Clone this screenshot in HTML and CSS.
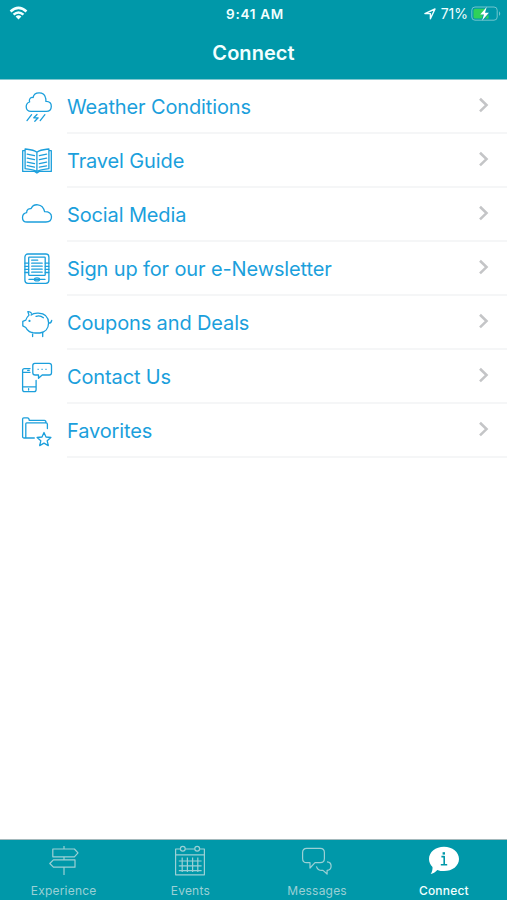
FILE: index.html
```html
<!DOCTYPE html>
<html lang="en">
<head>
<meta charset="utf-8">
<meta name="viewport" content="width=device-width, initial-scale=1">
<title>Connect</title>
<link rel="stylesheet" href="styles.css">
</head>
<body>
<div class="app">
  <header class="header">
    <div class="status">
      <svg class="wifi" viewBox="0 0 20 16"><path d="M1.2 5.6Q10-2.4 18.8 5.6L17.1 7.5Q10 1.2 2.9 7.5Z"/><path d="M4.2 8.7Q10 3.6 15.8 8.7L14.1 10.4Q10 7 5.9 10.4Z"/><path d="M7.1 11.5Q10 9.1 12.9 11.5L10 14.4Z"/></svg>
      <span class="time">9:41 AM</span>
      <div class="power">
        <svg class="location" viewBox="0 0 12 12"><path d="M.9 5.6 11 1 6.4 10.8V5.6Z"/></svg>
        <span class="percent">71%</span>
        <svg class="battery" viewBox="0 0 31 16"><rect x=".8" y="1" width="25.4" height="13.2" rx="3.2"/><path class="charge" d="M4 2.8H14.5L9.4 8.5H12L10.8 12.6H4Q2.5 12.6 2.5 11V4.4Q2.5 2.8 4 2.8Z"/><path class="charge" d="M17.5 8.6V12.6H14Z"/><path class="cap" d="M28 5.2q2.5 2.4 0 4.8Z"/><path class="bolt" d="M15.7 1 9.2 8.5H13L11.1 14.6 17.9 6.7H14Z"/></svg>
      </div>
    </div>
    <h1 class="title">Connect</h1>
  </header>
  <main class="list">
    <a class="row">
      <svg class="icon" viewBox="0 0 36 36"><path d="M12 23.4C8.9 23.4 7.2 21.1 7.2 18.7 7.2 16.2 8.7 14.6 10.6 14 9.5 10.9 12 9 14.1 9.6 15.2 3.4 24.8 3.3 26.4 9.4 27.2 11.3 26.8 12.5 26.9 13.4 30.8 13.3 32.4 15.6 32.3 18.4 32.2 21.2 30.3 23.4 27.2 23.4Z"/><path d="M12.6 26.7 8 32.6M25.9 26.7 21.2 32.6M18 26.5 14.8 29.8H19.2L15.8 33.2"/></svg>
      <span class="label">Weather Conditions</span>
      <svg class="chevron" viewBox="0 0 12 16"><path d="m2 1.8 6.5 6.3L2 14.4"/></svg>
    </a>
    <a class="row">
      <svg class="icon" viewBox="0 0 36 36"><path d="M17.9 10.2C13.8 7.3 9.9 7.5 6.1 7V26.7C10.2 27.4 14.2 27.2 17.9 29.3 21.7 27.2 25.8 27.4 29.9 26.7V7C26 7.5 21.9 7.3 17.9 10.2V29.3M6.1 8.7H3.7V29.4H15.6L17.9 31 20.3 29.4H32.3V8.7H29.9"/><path d="m8.2 12.2 7.3 1.5m-7.3 2.5 7.3 1.5m-7.3 2.5 7.3 1.5m-7.3 2 7.3 1.4M20.4 13.7l7.2-1.5m-7.2 5.5 7.2-1.5m-7.2 5.5 7.2-1.5m-7.2 5 7.2-1.4"/></svg>
      <span class="label">Travel Guide</span>
      <svg class="chevron" viewBox="0 0 12 16"><path d="m2 1.8 6.5 6.3L2 14.4"/></svg>
    </a>
    <a class="row">
      <svg class="icon" viewBox="0 0 36 36"><path d="M8.1 26C5.2 26 3.5 24 3.5 21.7 3.5 19 5.1 17.1 7.6 16.7 7.7 13.2 10 12.4 12.1 12.6 14.2 7.5 23.5 6.6 25.6 15.7 29.9 15.6 32.5 17.4 32.5 20.8 32.5 24.2 30.1 26 26.9 26Z"/></svg>
      <span class="label">Social Media</span>
      <svg class="chevron" viewBox="0 0 12 16"><path d="m2 1.8 6.5 6.3L2 14.4"/></svg>
    </a>
    <a class="row">
      <svg class="icon" viewBox="0 0 36 36"><rect x="5.9" y="4" width="24" height="29.3" rx="3"/><rect x="9.7" y="7.1" width="16.5" height="18.2" rx=".6"/><path d="M6 13.2h3.6M6 16.3h3.6M6 19.4h3.6M6 22.5h3.6m16.7-9.3h3.5m-3.5 3.1h3.5m-3.5 3.1h3.5m-3.5 3.1h3.5M12.7 10.2h6m-6 3h10.5m-10.5 3h10.5m-10.5 3h10.5m-10.5 3h10.5M10 29.4h4.6m6.8 0H26"/><ellipse cx="18" cy="29.4" rx="2.6" ry="1.5"/><path d="M16.5 29.4h3"/></svg>
      <span class="label">Sign up for our e-Newsletter</span>
      <svg class="chevron" viewBox="0 0 12 16"><path d="m2 1.8 6.5 6.3L2 14.4"/></svg>
    </a>
    <a class="row">
      <svg class="icon" viewBox="0 0 36 36"><path d="M12.4 8.2C11.2 6.5 10.6 6.4 8.8 6.6L10 10.1C8.2 11.8 7.5 13 6.8 15.1L3.8 16.3V20.9L6.8 22.5C8.1 25.4 10.6 28 16.4 28H20.7C26.2 27.4 29.5 23.3 29.6 18.1 29.4 11.7 25.3 8.3 19.4 8.1 15.8 7.9 13.9 8.3 12.1 10M29.5 18.2C32 18.4 32.3 17.2 32.7 15.5M17 11.3Q21 9.8 24.4 12.7M13.6 27.5v4M23.7 27.5v4"/><circle class="solid" cx="10.5" cy="15.9" r="1.1"/></svg>
      <span class="label">Coupons and Deals</span>
      <svg class="chevron" viewBox="0 0 12 16"><path d="m2 1.8 6.5 6.3L2 14.4"/></svg>
    </a>
    <a class="row">
      <svg class="icon" viewBox="0 0 36 36"><path d="M11 9.6H5.5Q3.6 9.6 3.6 11.5V30.5Q3.6 32.7 5.7 32.7H15Q17.1 32.7 17.1 30.5V21.5M3.7 13.3H11M3.7 27.9H17M8.7 11.4h1.5m-.6 18.3v1.3"/><path d="M15.8 4.3H30.2Q32.5 4.3 32.5 6.6V13.7Q32.5 16 30.2 16H23.2L19.5 19.3V16H16.2Q13.8 16 13.8 13.7V6.5Q13.8 4.3 15.8 4.3Z"/><path class="dots" d="M18.8 10.3h.8m3.1 0h.8m3.1 0h.8"/></svg>
      <span class="label">Contact Us</span>
      <svg class="chevron" viewBox="0 0 12 16"><path d="m2 1.8 6.5 6.3L2 14.4"/></svg>
    </a>
    <a class="row">
      <svg class="icon" viewBox="0 0 36 36"><path d="M15.3 25H5.2Q3.6 25 3.6 23.4V6Q3.6 4.8 4.8 4.8H8.5Q10 4.8 10.3 7.4H25.4Q27 7.4 27 9.6M6.8 25V10.7Q6.8 9.8 7.7 9.8H27Q28.4 9.8 28.4 11.2V15.5"/><path d="m25 19.5 2 4.5 4.9.5-3.7 3.3 1.1 4.8-4.3-2.5-4.3 2.5 1.1-4.8-3.7-3.3 4.9-.5Z"/></svg>
      <span class="label">Favorites</span>
      <svg class="chevron" viewBox="0 0 12 16"><path d="m2 1.8 6.5 6.3L2 14.4"/></svg>
    </a>
  </main>
  <nav class="tabs">
    <a class="tab">
      <svg viewBox="0 0 34 34"><path d="M17 2v3M5.8 5H27.4L31 8.9 27.4 12.8H5.8ZM17 12.8v3M28 15.8H6.4L2.8 19.5 6.4 23.2H28ZM17 23.2V31"/></svg>
      <span>Experience</span>
    </a>
    <a class="tab">
      <svg viewBox="0 0 34 34"><path d="M7.4 5H2.6V30.8H31.4V5H26.6M12.2 5H21.8M2.6 10.8H31.4M5.8 17h22.8M5.8 21.8h22.8M5.8 26.6h22.8M9.2 13.5v14.4m5.2-14.4v14.4m5.2-14.4v14.4m5.2-14.4v14.4"/><circle cx="9.8" cy="4.8" r="2.4"/><circle cx="24.2" cy="4.8" r="2.4"/></svg>
      <span>Events</span>
    </a>
    <a class="tab">
      <svg viewBox="0 0 34 34"><path d="M6.7 4.4H20.3Q24.4 4.4 24.4 8.5V14.6Q24.4 18.7 20.3 18.7H15L10 24V18.7H6.7Q2.6 18.7 2.6 14.6V8.5Q2.6 4.4 6.7 4.4ZM16.4 22.3Q17.6 26.4 21.8 26.4H23L27.1 30V26.4Q31.1 26 31.1 22Q31.1 18.1 27 17.8"/></svg>
      <span>Messages</span>
    </a>
    <a class="tab active">
      <svg viewBox="0 0 34 34"><path class="bubble" d="M17 2.8C25.4 2.8 32 8.1 32 15S25.4 27.1 17 27.1C14.6 27.1 12.3 26.7 10.3 25.9 8.3 28 6 29.5 3.7 30.1 5.1 27.8 5.7 25.3 5.5 22.9 3.3 20.8 2 18 2 15 2 8.1 8.6 2.8 17 2.8Z"/><path class="info" d="M14.4 12.6h2.8v8.1M13.8 20.8h6.4"/><rect class="dot" x="15.6" y="8.2" width="2.4" height="2.4"/></svg>
      <span>Connect</span>
    </a>
  </nav>
</div>
</body>
</html>
```
FILE: styles.css
```css
* { box-sizing: border-box; }
body { margin: 0; background: #fff; font-family: Inter, "Liberation Sans", sans-serif; }
svg { display: block; flex: none; fill: none; stroke: currentColor; }
.app { height: 900px; display: flex; flex-direction: column; }
.header { height: 80px; background: #0098a9; color: #f2ffff; border-bottom: 1px solid #83c8d0; }
.status { display: grid; grid-template-columns: 1fr auto 1fr; height: 27px; align-items: center; padding: 0 5px 0 8px; }
.wifi { width: 21px; height: 16px; margin-top: -2px; fill: #f2ffff; stroke: none; }
.time { font-size: 13.5px; font-weight: 600; letter-spacing: .7px; }
.power { display: flex; justify-content: flex-end; align-items: center; }
.location { width: 12px; height: 12px; stroke-width: 1.4; stroke-linejoin: round; margin-right: 5px; }
.percent { font-size: 14px; margin-right: 3px; }
.battery { width: 31px; height: 16px; stroke: #70c5ce; stroke-width: 1; }
.battery .charge { fill: #2fd15a; stroke: none; }
.battery .cap { fill: #70c5ce; stroke: none; }
.battery .bolt { fill: #fff; stroke: none; }
.title { margin: 12px 0 0; text-align: center; font-size: 20px; line-height: 28px; font-weight: 600; letter-spacing: .05px; }
.list { flex: 1; }
.row { height: 54.15px; display: flex; align-items: center; padding: 0 17px 0 19px; color: #1b9fdc; }
.row:first-child { height: 53.6px; }
.icon { width: 36px; height: 36px; margin-top: -1px; stroke-width: 1.3; stroke-linecap: round; stroke-linejoin: round; }
.icon .solid { fill: currentColor; stroke: none; }
.icon .dots { stroke-width: .9; }
.label { flex: 1; margin: 0 -17px 0 12px; height: 100%; line-height: 54px; border-bottom: 2px solid #f5f6f7; font-size: 20px; letter-spacing: -.13px; white-space: nowrap; }
.chevron { width: 12px; height: 16px; stroke: #c4c5c7; stroke-width: 2.6; margin: -4px 0 0 -12px; }
.tabs { height: 61px; display: grid; grid-template-columns: repeat(4, 1fr); background: #0098a9; border-top: 1px solid #a4b9bc; color: #9bd0d5; }
.tab { display: flex; flex-direction: column; align-items: center; padding: 4px 0 0 .5px; font-size: 12px; line-height: 16px; letter-spacing: .2px; }
.tab svg { width: 34px; height: 34px; stroke-width: 1.2; stroke-linejoin: round; }
.tab span { margin-top: 5px; }
.active { color: #f2ffff; font-weight: 500; }
.bubble { fill: #fff; stroke: none; }
.info { stroke: #0098a9; stroke-width: 1.6; }
.dot { fill: #0098a9; stroke: none; }
```
